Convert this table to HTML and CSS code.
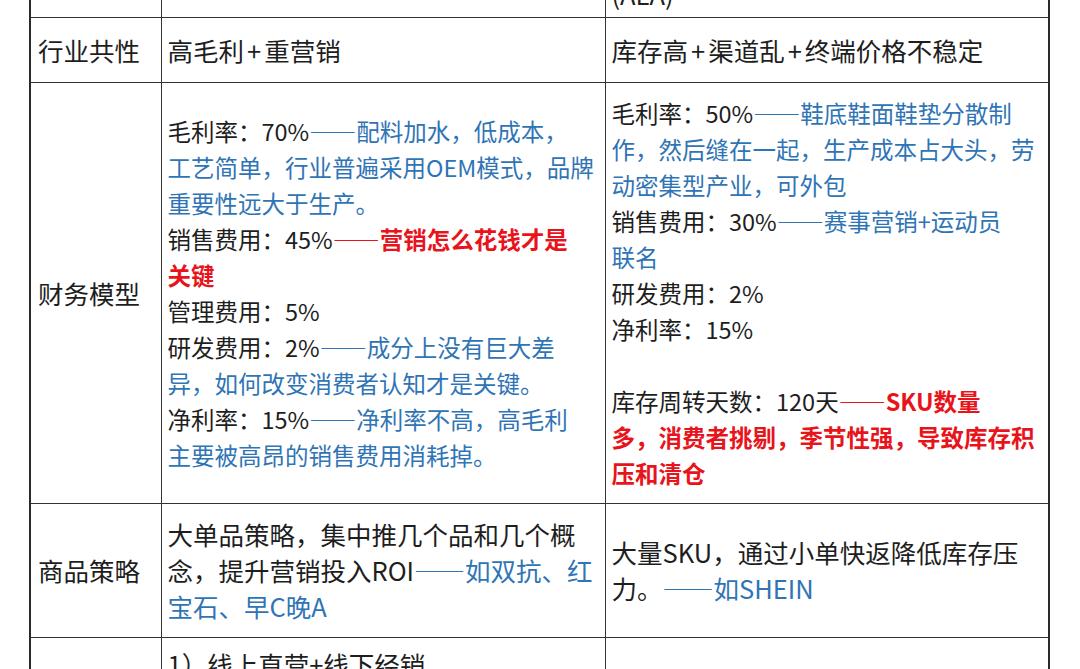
FILE: index.html
```html
<!DOCTYPE html>
<html lang="zh-CN">
<head>
<meta charset="utf-8">
<title>行业对比</title>
<link rel="stylesheet" href="styles.css">
</head>
<body>
<div class="page">
<table class="sheet">
<colgroup><col class="c1"><col class="c2"><col class="c3"></colgroup>
<tr class="r0"><th></th><td></td><td class="cut-top">(ALA)</td></tr>
<tr class="r1"><th>行业共性</th><td class="lg">高毛利<span class="plus">+</span>重营销</td><td class="lg">库存高<span class="plus">+</span>渠道乱<span class="plus">+</span>终端价格不稳定</td></tr>
<tr class="r2"><th>财务模型</th><td class="sm">毛利率：70%<span class="blue">——配料加水，低成本，<br>工艺简单，行业普遍采用OEM模式，品牌<br>重要性远大于生产。</span><br>销售费用：45%<span class="red">——营销怎么花钱才是<br>关键</span><br>管理费用：5%<br>研发费用：2%<span class="blue">——成分上没有巨大差<br>异，如何改变消费者认知才是关键。</span><br>净利率：15%<span class="blue">——净利率不高，高毛利<br>主要被高昂的销售费用消耗掉。</span></td><td class="sm">毛利率：50%<span class="blue">——鞋底鞋面鞋垫分散制<br>作，然后缝在一起，生产成本占大头，劳<br>动密集型产业，可外包</span><br>销售费用：30%<span class="blue">——赛事营销+运动员<br>联名</span><br>研发费用：2%<br>净利率：15%<br><br>库存周转天数：120天<span class="red">——SKU数量<br>多，消费者挑剔，季节性强，导致库存积<br>压和清仓</span></td></tr>
<tr class="r3"><th>商品策略</th><td class="lg">大单品策略，集中推几个品和几个概<br>念，提升营销投入ROI<span class="blue">——如双抗、红<br>宝石、早C晚A</span></td><td class="lg">大量SKU，通过小单快返降低库存压<br>力。<span class="blue">——如SHEIN</span></td></tr>
<tr class="r4"><th></th><td class="lg top">1）线上直营+线下经销</td><td class="lg top"></td></tr>
</table>
</div>
</body>
</html>
```
FILE: styles.css
```css
html, body {
  margin: 0;
  padding: 0;
  background: #ffffff;
  overflow: hidden;
}
body {
  width: 1080px;
  height: 669px;
  font-family: "Noto Sans CJK SC", "Noto Sans", sans-serif;
  color: #1e1e1e;
}
.page {
  padding-left: 29px;
  margin-top: -43px;
}
.sheet {
  border-collapse: collapse;
  table-layout: fixed;
  width: 1019px;
  border-left: 2px solid #2a2a2a;
  border-right: 2px solid #2a2a2a;
}
.c1 { width: 131px; }
.c2 { width: 444px; }
.c3 { width: 444px; }
.sheet th,
.sheet td {
  border: 1px solid #333333;
  padding: 0 0 0 6px;
  vertical-align: middle;
  white-space: nowrap;
  text-align: left;
  line-height: 36px;
}
.sheet th {
  font-weight: normal;
  font-size: 25.5px;
  padding-left: 7px;
  border-left: 2px solid #2a2a2a;
}
.sheet tr > :last-child {
  border-right: 2px solid #2a2a2a;
}
.r0 { height: 60px; }
.r0 th, .r0 td { border-top: none; }
.r1 { height: 65px; }
.r2 { height: 421px; }
.r3 { height: 134px; }
.r4 { height: 80px; }
.cut-top {
  vertical-align: bottom !important;
  font-size: 25.5px;
  padding-bottom: 5px !important;
}
.lg { font-size: 25.5px; }
.sm { font-size: 23.5px; }
.plus { padding: 0 3px; }
.top {
  vertical-align: top !important;
  padding-top: 8px !important;
}
.blue { color: #2f74b5; }
.red { color: #e8141b; font-weight: bold; }
```
